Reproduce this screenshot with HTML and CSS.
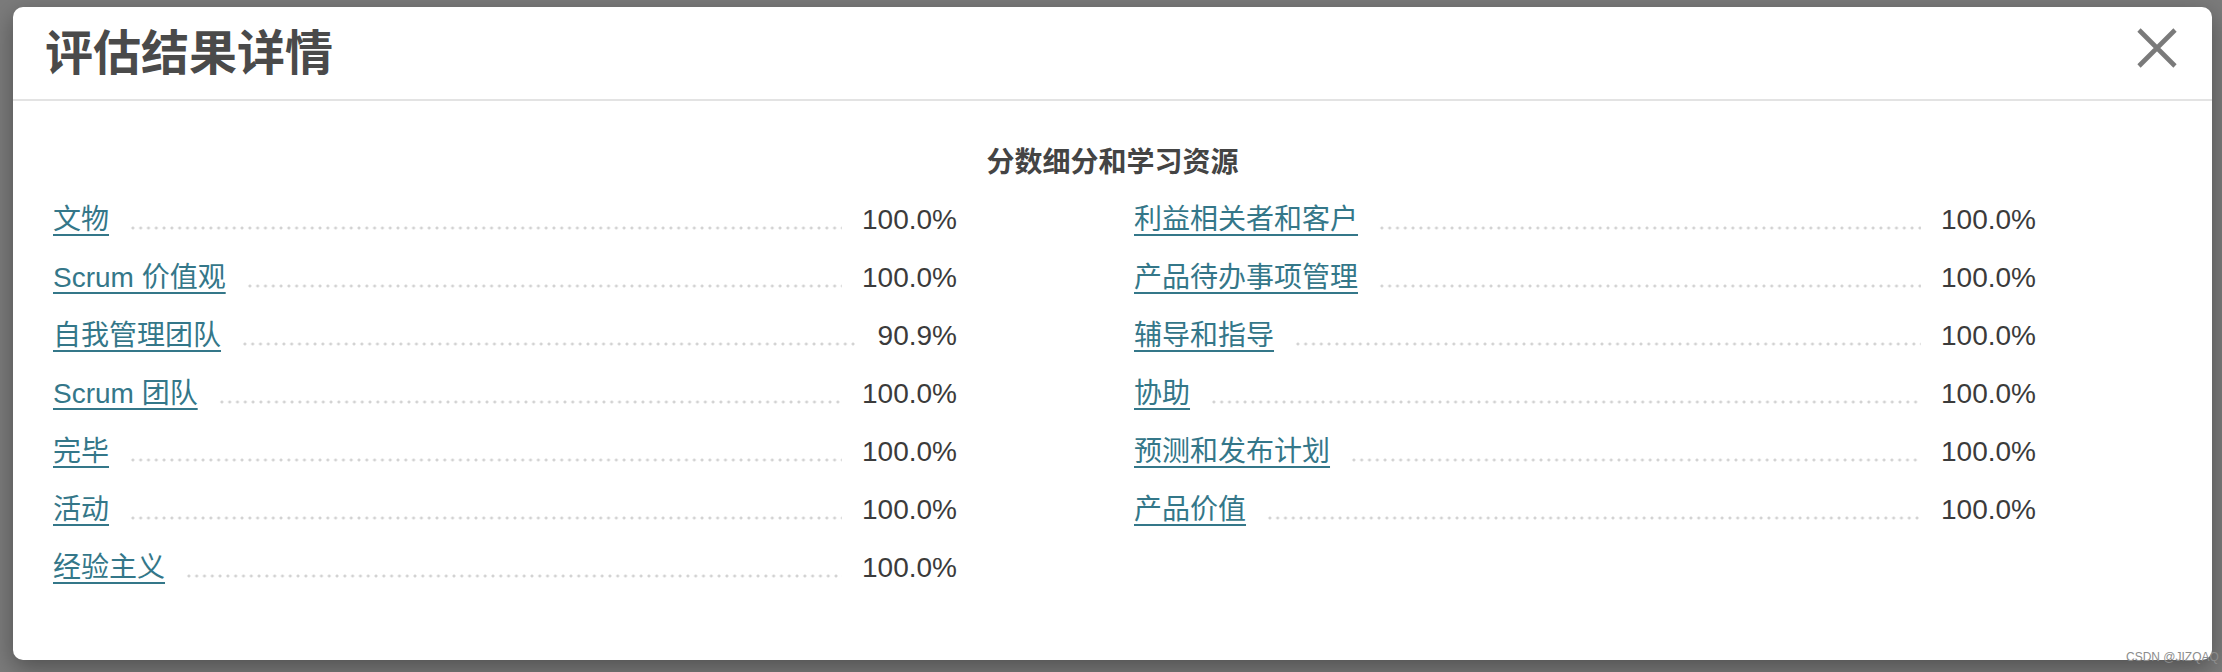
FILE: index.html
```html
<!DOCTYPE html>
<html lang="zh-CN">
<head>
<meta charset="utf-8">
<title>评估结果详情</title>
<link rel="stylesheet" href="styles.css">
</head>
<body>
<div class="page">
  <div class="modal">
    <div class="modal-header">
      <h1 class="modal-title">评估结果详情</h1>
      <button class="close" aria-label="关闭">
        <svg width="40" height="40" viewBox="0 0 40 40"><path d="M2 2 L38 38 M38 2 L2 38" stroke="#7a7a7a" stroke-width="4.6" fill="none"/></svg>
      </button>
    </div>
    <div class="modal-body">
      <div class="section-title">分数细分和学习资源</div>
      <div class="columns">
        <div class="col">
          <div class="row"><a class="link" href="#">文物</a><span class="leader"></span><span class="score">100.0%</span></div>
          <div class="row"><a class="link" href="#">Scrum 价值观</a><span class="leader"></span><span class="score">100.0%</span></div>
          <div class="row"><a class="link" href="#">自我管理团队</a><span class="leader"></span><span class="score">90.9%</span></div>
          <div class="row"><a class="link" href="#">Scrum 团队</a><span class="leader"></span><span class="score">100.0%</span></div>
          <div class="row"><a class="link" href="#">完毕</a><span class="leader"></span><span class="score">100.0%</span></div>
          <div class="row"><a class="link" href="#">活动</a><span class="leader"></span><span class="score">100.0%</span></div>
          <div class="row"><a class="link" href="#">经验主义</a><span class="leader"></span><span class="score">100.0%</span></div>
        </div>
        <div class="col">
          <div class="row"><a class="link" href="#">利益相关者和客户</a><span class="leader"></span><span class="score">100.0%</span></div>
          <div class="row"><a class="link" href="#">产品待办事项管理</a><span class="leader"></span><span class="score">100.0%</span></div>
          <div class="row"><a class="link" href="#">辅导和指导</a><span class="leader"></span><span class="score">100.0%</span></div>
          <div class="row"><a class="link" href="#">协助</a><span class="leader"></span><span class="score">100.0%</span></div>
          <div class="row"><a class="link" href="#">预测和发布计划</a><span class="leader"></span><span class="score">100.0%</span></div>
          <div class="row"><a class="link" href="#">产品价值</a><span class="leader"></span><span class="score">100.0%</span></div>
        </div>
      </div>
    </div>
  </div>
  <div class="watermark">CSDN @JIZQAQ</div>
</div>
</body>
</html>
```

FILE: styles.css
```css
html, body {
  margin: 0;
  padding: 0;
}
body {
  background: #7b7b7b;
  width: 2222px;
  height: 672px;
  overflow: hidden;
  font-family: "Liberation Sans", "Noto Sans CJK SC", sans-serif;
}
.page {
  position: relative;
  padding: 7px 0 0 13px;
  height: 665px;
}
.modal {
  width: 2199px;
  height: 653px;
  background: #fff;
  border-radius: 10px;
  box-shadow: 0 8px 24px rgba(0, 0, 0, 0.35);
  box-sizing: border-box;
}
.modal-header {
  display: flex;
  justify-content: space-between;
  align-items: flex-start;
  height: 92px;
  padding: 0 35px 0 32px;
  border-bottom: 2px solid #e3e3e3;
}
.modal-title {
  margin: 0;
  padding-top: 2px;
  font-size: 48px;
  line-height: 90px;
  font-weight: 700;
  color: #4a4a4a;
}
.close {
  margin-top: 21px;
  padding: 0;
  border: 0;
  background: none;
  width: 40px;
  height: 40px;
  display: block;
}
.close svg {
  display: block;
}
.modal-body {
  padding: 42px 0 0 40px;
}
.section-title {
  font-size: 28px;
  line-height: 40px;
  font-weight: 700;
  color: #444;
  text-align: center;
  margin-left: -40px;
}
.columns {
  display: grid;
  grid-template-columns: 904px 902px;
  column-gap: 177px;
  margin-top: 8px;
}
.col {
  display: flex;
  flex-direction: column;
}
.row {
  display: flex;
  height: 58px;
  line-height: 58px;
  font-size: 28px;
}
.link {
  color: #347789;
  text-decoration: underline;
  text-decoration-thickness: 2px;
  text-underline-offset: 5px;
  white-space: nowrap;
}
.leader {
  flex: 1;
  margin: 0 20px;
  background-image: radial-gradient(circle, #d2d2d2 1.2px, rgba(210, 210, 210, 0) 1.8px);
  background-size: 7.8px 4px;
  background-repeat: repeat-x;
  background-position: 0 35px;
}
.score {
  color: #3b3b3b;
  white-space: nowrap;
}
.watermark {
  position: absolute;
  left: 2126px;
  top: 650px;
  font-size: 12px;
  line-height: 14px;
  color: #8c8c8c;
  white-space: nowrap;
  font-family: "Liberation Sans", sans-serif;
}
```
